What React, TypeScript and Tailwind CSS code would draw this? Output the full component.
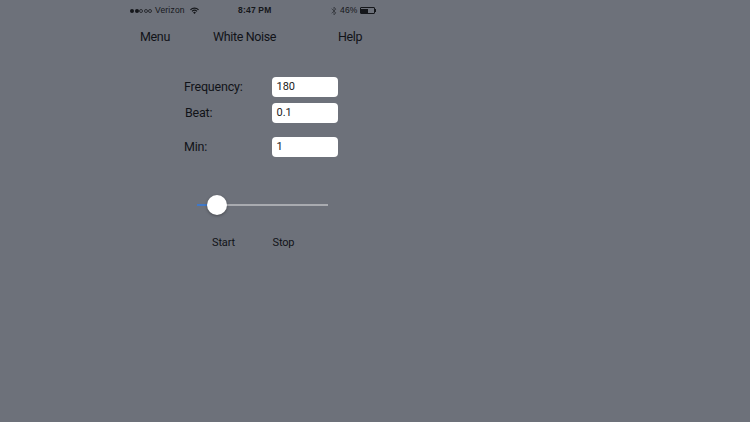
export default function App() {
  return (
    <div className="w-[750px] h-[422px] overflow-hidden bg-[#6d717a] text-[#111318] font-['Roboto','Liberation_Sans',sans-serif] flex flex-col">
      {/* status bar */}
      <div className="ml-[130px] w-[247px] h-[21px] flex items-center font-['Liberation_Sans',sans-serif] text-[8.5px] text-[#15171b] tracking-[0.2px]">
        <div className="flex items-center w-[108px]">
          <div className="flex gap-[0.5px]">
            <span className="w-[4px] h-[4px] rounded-full bg-[#15171b]" />
            <span className="w-[4px] h-[4px] rounded-full bg-[#15171b]" />
            <span className="w-[4px] h-[4px] rounded-full border-[0.5px] border-[#2b2d33]" />
            <span className="w-[4px] h-[4px] rounded-full border-[0.5px] border-[#2b2d33]" />
            <span className="w-[4px] h-[4px] rounded-full border-[0.5px] border-[#2b2d33]" />
          </div>
          <span className="ml-[3px]">Verizon</span>
          <svg className="ml-[5px]" width="9" height="7" viewBox="0 0 9 7">
            <path d="M0 2.4A6.4 6.4 0 0 1 9 2.4L8.1 3.3A5.1 5.1 0 0 0 .9 3.3Z" fill="#15171b" />
            <path d="M1.6 4A4.1 4.1 0 0 1 7.4 4L6.6 4.8A3 3 0 0 0 2.4 4.8Z" fill="#15171b" />
            <path d="M3.1 5.5A2 2 0 0 1 5.9 5.5L4.5 7Z" fill="#15171b" />
          </svg>
        </div>
        <span className="font-semibold">8:47 PM</span>
        <div className="flex items-center w-[46px] ml-auto">
          <svg width="6" height="10" viewBox="0 0 5 9" className="mr-[3px]">
            <path d="M.4 2.4 4.2 6.2 2.5 8V1L4.2 2.8.4 6.6" fill="none" stroke="#34363c" strokeWidth="0.7" />
          </svg>
          <span>46%</span>
          <div className="ml-[2px] flex items-center">
            <div className="w-[15px] h-[7px] border-[0.5px] border-[#15171b] rounded-[1px] p-[0.5px]">
              <div className="w-[7px] h-full bg-[#15171b]" />
            </div>
            <div className="w-[1px] h-[3px] bg-[#15171b]" />
          </div>
        </div>
      </div>

      {/* nav */}
      <div className="mt-[7px] h-[18px] flex items-center text-[12.5px] leading-[18px] tracking-[-0.35px]">
        <span className="ml-[140px] w-[73px]">Menu</span>
        <span className="w-[125px]">White Noise</span>
        <span>Help</span>
      </div>

      {/* form */}
      <div className="ml-[184px] mt-[31px] flex flex-col text-[12.5px] tracking-[-0.2px]">
        <div className="h-[20px] flex items-center">
          <span className="w-[88px]">Frequency:</span>
          <div className="w-[65.5px] h-[20px] rounded-[4px] bg-white flex items-center pl-[4.5px] text-[11px] tracking-normal text-[#1b1b1b]">180</div>
        </div>
        <div className="mt-[6px] h-[20px] flex items-center">
          <span className="w-[88px] pl-[1px]">Beat:</span>
          <div className="w-[65.5px] h-[20px] rounded-[4px] bg-white flex items-center pl-[4.5px] text-[11px] tracking-normal text-[#1b1b1b]">0.1</div>
        </div>
        <div className="mt-[14px] h-[20px] flex items-center">
          <span className="w-[88px]">Min:</span>
          <div className="w-[65.5px] h-[20px] rounded-[4px] bg-white flex items-center pl-[4.5px] text-[11px] tracking-normal text-[#1b1b1b]">1</div>
        </div>
      </div>

      {/* slider */}
      <div className="ml-[197px] mt-[38px] w-[131px] h-[20px] flex items-center relative">
        <div className="w-[12px] h-[2px] bg-[#3f78c8]" />
        <div className="flex-1 h-[2px] bg-[#a9abb0]" />
        <div className="absolute left-[10px] top-0 w-[20px] h-[20px] rounded-full bg-white shadow-[0_1px_3px_rgba(0,0,0,0.35)]" />
      </div>

      {/* buttons */}
      <div className="mt-[20px] ml-[212px] h-[16px] flex items-center text-[11px] tracking-[-0.15px]">
        <span className="w-[60.5px]">Start</span>
        <span>Stop</span>
      </div>
    </div>
  );
}
